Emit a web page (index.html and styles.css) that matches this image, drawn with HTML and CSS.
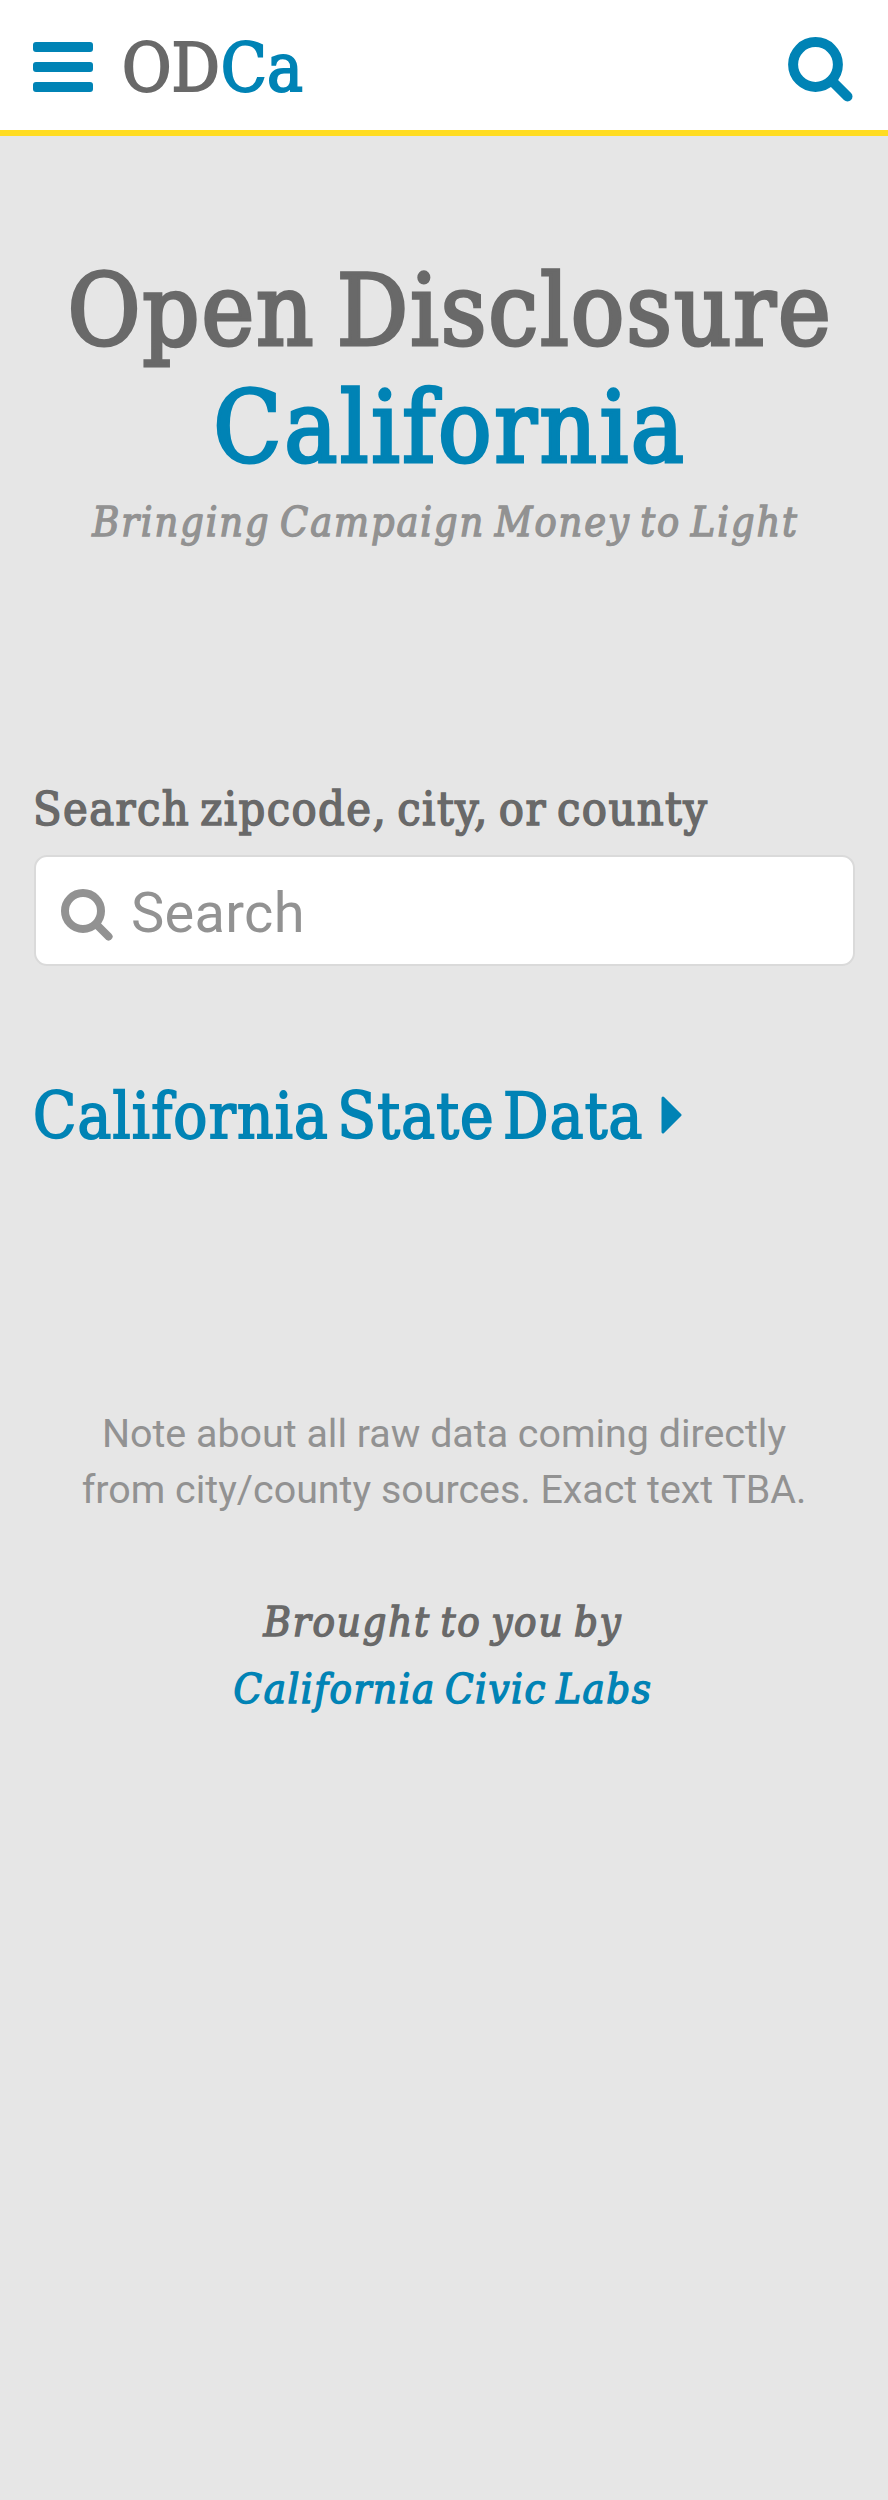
FILE: index.html
```html
<!DOCTYPE html>
<html lang="en">
<head>
<meta charset="utf-8">
<title>Open Disclosure California</title>
<link rel="stylesheet" href="styles.css">
</head>
<body>
<header class="topbar">
  <a class="menu" aria-label="Menu"><span class="bar"></span><span class="bar"></span><span class="bar"></span></a>
  <div class="logo"><span class="logo-od">OD</span><span class="logo-ca">Ca</span></div>
  <svg class="search-link" viewBox="0 0 66 66"><circle cx="27.5" cy="27.5" r="22.4"/><path d="M45 45L59.5 59.5"/></svg>
</header>
<main class="page">
  <h1 class="title"><span class="t1">Open Disclosure</span><br><span class="t2">California</span></h1>
  <p class="tagline">Bringing Campaign Money to Light</p>
  <label class="label">Search zipcode, city, or county</label>
  <div class="field">
    <svg class="field-icon" viewBox="0 0 52 52"><circle cx="22" cy="22" r="18"/><path d="M36 36L47.5 47.5"/></svg>
    <span class="placeholder">Search</span>
  </div>
  <a class="state"><span>California State Data</span><svg class="arrow" viewBox="0 0 21 38"><path d="M2 2L19 19L2 36Z"/></svg></a>
  <p class="note">Note about all raw data coming directly<br>from city/county sources. Exact text TBA.</p>
  <p class="credit"><span class="c1">Brought to you by</span><br><span class="c2">California Civic Labs</span></p>
</main>
</body>
</html>
```
FILE: styles.css
```css
* { box-sizing: border-box; }
body { margin: 0; min-height: 2500px; background: #e6e6e6; color: #696969; font-family: "DejaVu Serif Condensed", "DejaVu Serif", serif; font-stretch: condensed; }
h1, p { margin: 0; font-weight: 400; }
.topbar { display: flex; align-items: flex-start; height: 136px; padding: 0 34px 0 33px; background: #fff; border-bottom: 6px solid #ffdc22; }
.menu { display: flex; flex-direction: column; gap: 10px; width: 60px; margin-top: 42px; }
.bar { height: 10px; border-radius: 3px; background: #0083b5; }
.logo { margin: 28px auto 0 29px; font-size: 67px; line-height: 80px; white-space: nowrap; -webkit-text-stroke: 2px; }
.logo-ca { color: #0083b5; margin-left: 1px; }
.search-link { width: 66px; height: 66px; margin-top: 37px; }
.search-link, .field-icon { fill: none; stroke: #0083b5; stroke-width: 10; stroke-linecap: round; }
.page { padding: 116px 34px 0; }
.title { padding-left: 12px; font-size: 99px; line-height: 117px; text-align: center; -webkit-text-stroke: 3.2px; white-space: nowrap; }
.t1 { letter-spacing: 2px; word-spacing: -9px; }
.t2 { color: #0083b5; letter-spacing: 2.7px; }
.tagline { padding-left: 3px; margin-top: 6px; font-size: 41px; line-height: 60px; font-style: italic; text-align: center; color: #929292; white-space: nowrap; letter-spacing: 1.9px; word-spacing: -4px; -webkit-text-stroke: 1.3px; }
.label { display: block; margin-top: 227px; font-size: 46.5px; line-height: 60px; white-space: nowrap; letter-spacing: 1.4px; word-spacing: -4.5px; text-indent: -1px; -webkit-text-stroke: 1.5px; }
.field { display: flex; align-items: flex-start; height: 111px; margin-top: 16px; width: 821px; background: #fff; border: 2px solid #dadada; border-radius: 13px; padding-left: 25px; }
.field-icon { width: 52px; height: 52px; margin-top: 32px; stroke: #929292; stroke-width: 8; }
.placeholder { margin: 22px 0 0 18px; font: 56px/68px Roboto, sans-serif; letter-spacing: .3px; color: #929292; }
.state { display: flex; align-items: flex-start; margin-top: 111px; font-size: 63px; line-height: 80px; color: #0083b5; white-space: nowrap; letter-spacing: 1.2px; word-spacing: -11px; -webkit-text-stroke: 1.8px; }
.state span { margin-left: -1px; }
.arrow { width: 21px; height: 38px; margin: 19px 0 0 17px; fill: #0083b5; stroke: #0083b5; stroke-width: 3; stroke-linejoin: round; }
.note { margin-top: 249px; font: 39.4px/56px Roboto, sans-serif; text-align: center; color: #929292; white-space: nowrap; }
.credit { margin-top: 70px; padding-right: 2px; font-size: 41.5px; line-height: 67px; font-style: italic; text-align: center; white-space: nowrap; word-spacing: -4px; -webkit-text-stroke: 1.4px; }
.c1 { letter-spacing: 1.8px; }
.c2 { color: #0083b5; letter-spacing: 1.5px; }
```
